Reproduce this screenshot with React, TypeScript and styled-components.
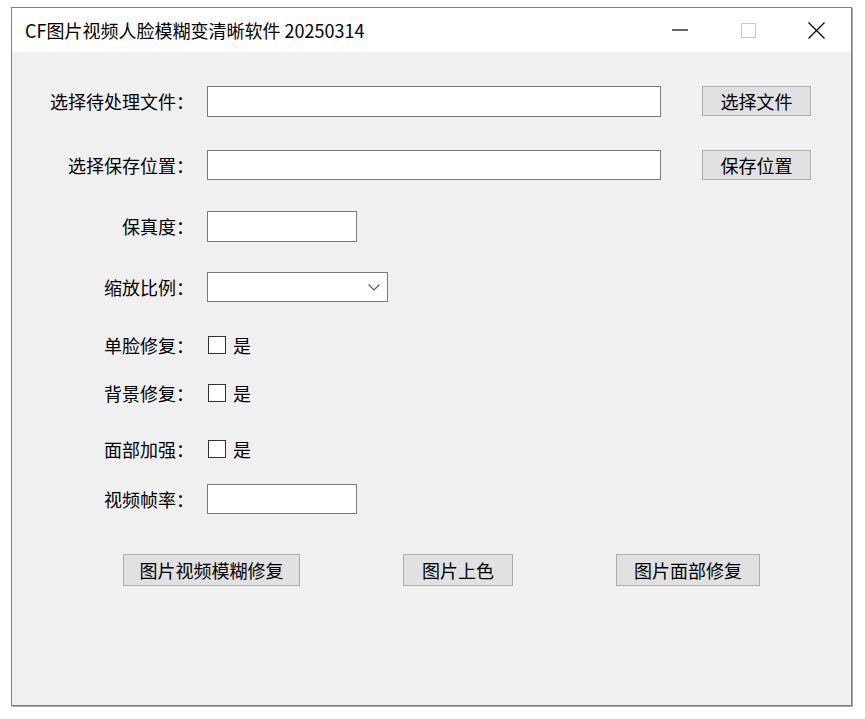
import React from 'react'
import styled, { createGlobalStyle } from 'styled-components'

const GlobalStyle = createGlobalStyle`
  html, body {
    margin: 0;
    padding: 0;
    background: #ffffff;
  }
  body {
    font-family: "Noto Sans CJK SC", "Noto Sans", sans-serif;
    color: #000000;
  }
  * {
    box-sizing: border-box;
  }
`

const App = () => {
  return (
    <>
      <GlobalStyle />
      <Desktop>
        <Window>
          <TitleBar>
            <TitleText>CF图片视频人脸模糊变清晰软件 20250314</TitleText>
            <Controls>
              <ControlButton aria-label="minimize">
                <svg width="16" height="2" viewBox="0 0 16 2">
                  <line x1="0" y1="1" x2="16" y2="1" stroke="#000" strokeWidth="1.2" />
                </svg>
              </ControlButton>
              <ControlButton aria-label="maximize">
                <svg width="15" height="15" viewBox="0 0 15 15">
                  <rect x="0.5" y="0.5" width="14" height="14" fill="none" stroke="#c8c8c8" strokeWidth="1" />
                </svg>
              </ControlButton>
              <ControlButton aria-label="close">
                <svg width="17" height="17" viewBox="0 0 17 17">
                  <path d="M0.5 0.5 L16.5 16.5 M16.5 0.5 L0.5 16.5" stroke="#000" strokeWidth="1.2" fill="none" />
                </svg>
              </ControlButton>
            </Controls>
          </TitleBar>

          <Content>
            <FormRow $top={33}>
              <Label>选择待处理文件：</Label>
              <TextBox $width={454} />
              <ActionButton $width={109} $left={41}>选择文件</ActionButton>
            </FormRow>

            <FormRow $top={32}>
              <Label>选择保存位置：</Label>
              <TextBox $width={454} $height={30} />
              <ActionButton $width={109} $left={41}>保存位置</ActionButton>
            </FormRow>

            <FormRow $top={29}>
              <Label>保真度：</Label>
              <TextBox $width={150} />
            </FormRow>

            <FormRow $top={29}>
              <Label>缩放比例：</Label>
              <ComboBox>
                <svg width="12" height="7" viewBox="0 0 12 7">
                  <path d="M0.5 0.5 L6 6 L11.5 0.5" stroke="#555" strokeWidth="1.1" fill="none" />
                </svg>
              </ComboBox>
            </FormRow>

            <FormRow $top={26}>
              <Label>单脸修复：</Label>
              <CheckBox />
              <CheckText>是</CheckText>
            </FormRow>

            <FormRow $top={16}>
              <Label>背景修复：</Label>
              <CheckBox />
              <CheckText>是</CheckText>
            </FormRow>

            <FormRow $top={24}>
              <Label>面部加强：</Label>
              <CheckBox />
              <CheckText>是</CheckText>
            </FormRow>

            <FormRow $top={18}>
              <Label>视频帧率：</Label>
              <TextBox $width={150} $height={30} />
            </FormRow>

            <ButtonRow>
              <ActionButton $width={177} $height={32}>图片视频模糊修复</ActionButton>
              <ActionButton $width={110} $height={32}>图片上色</ActionButton>
              <ActionButton $width={144} $height={32}>图片面部修复</ActionButton>
            </ButtonRow>
          </Content>
        </Window>
      </Desktop>
    </>
  )
}

export default App

const Desktop = styled.div`
  width: 865px;
  height: 719px;
  padding: 7px 0 0 11px;
`

const Window = styled.div`
  width: 841px;
  height: 699px;
  border: 1px solid #7e7e7e;
  box-shadow: 1px 1px 0 #a8a8a8;
  display: flex;
  flex-direction: column;
  background: #f0f0f0;
`

const TitleBar = styled.div`
  height: 44px;
  flex-shrink: 0;
  background: #ffffff;
  display: flex;
  align-items: center;
  justify-content: space-between;
  padding-left: 13px;
`

const TitleText = styled.div`
  font-size: 18px;
  line-height: 22px;
  color: #000000;
  white-space: nowrap;
`

const Controls = styled.div`
  display: flex;
  height: 100%;
  margin-right: 1px;
`

const ControlButton = styled.div`
  width: 68px;
  height: 100%;
  display: flex;
  align-items: center;
  justify-content: center;
`

const Content = styled.div`
  flex: 1;
  display: flex;
  flex-direction: column;
  background: #f0f0f0;
`

const FormRow = styled.div<{ $top: number }>`
  display: flex;
  align-items: center;
  height: 32px;
  margin-top: ${(p) => p.$top}px;
`

const Label = styled.div`
  width: 182px;
  flex-shrink: 0;
  text-align: right;
  font-size: 18px;
  line-height: 22px;
  color: #000000;
  white-space: nowrap;
`

const TextBox = styled.div<{ $width: number; $height?: number }>`
  width: ${(p) => p.$width}px;
  height: ${(p) => p.$height ?? 31}px;
  margin-left: 13px;
  background: #ffffff;
  border: 1px solid #7a7a7a;
`

const ComboBox = styled.div`
  width: 181px;
  height: 30px;
  margin-left: 13px;
  background: #ffffff;
  border: 1px solid #7a7a7a;
  display: flex;
  align-items: center;
  justify-content: flex-end;
  padding-right: 7px;
`

const CheckBox = styled.div`
  width: 18px;
  height: 18px;
  margin-left: 14px;
  background: #ffffff;
  border: 1px solid #333333;
`

const CheckText = styled.span`
  margin-left: 7px;
  font-size: 18px;
  line-height: 22px;
`

const ActionButton = styled.div<{ $width: number; $height?: number; $left?: number }>`
  width: ${(p) => p.$width}px;
  height: ${(p) => p.$height ?? 30}px;
  margin-left: ${(p) => p.$left ?? 0}px;
  background: #e1e1e1;
  border: 1px solid #adadad;
  display: flex;
  align-items: center;
  justify-content: center;
  font-size: 18px;
  line-height: 22px;
  color: #000000;
  white-space: nowrap;
`

const ButtonRow = styled.div`
  display: flex;
  align-items: center;
  gap: 103px;
  margin-top: 39px;
  padding-left: 111px;
`
